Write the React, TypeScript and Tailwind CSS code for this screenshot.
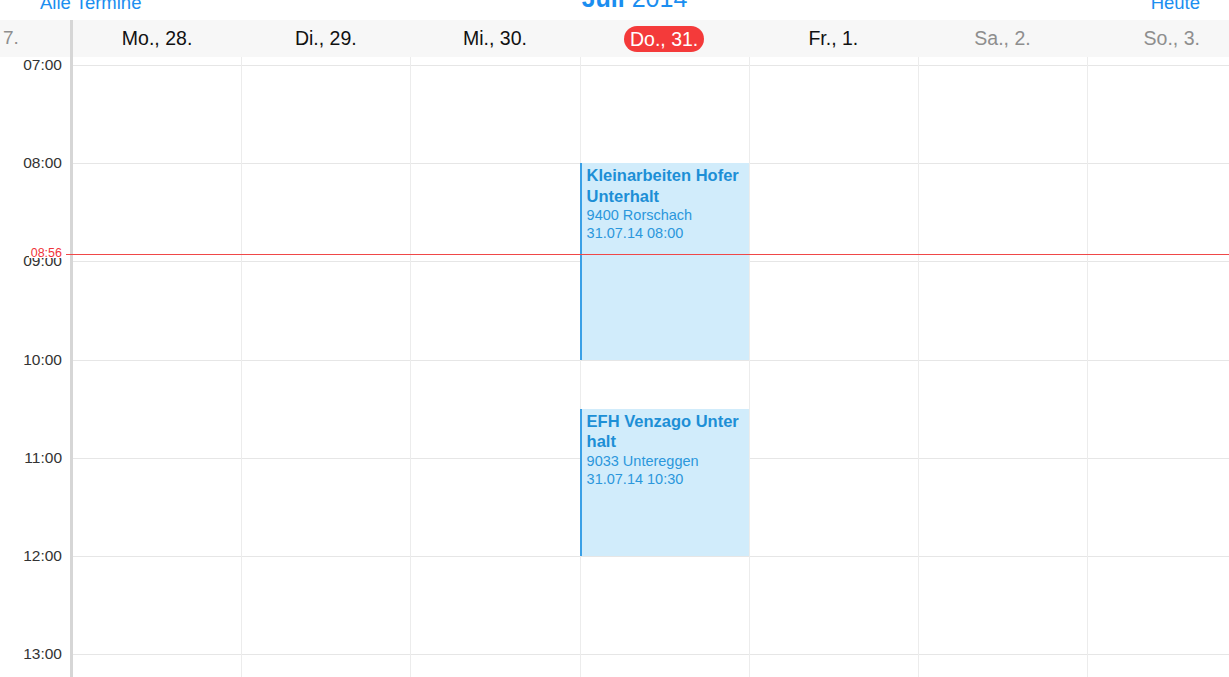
import React from "react";

const days = [
  { label: "Mo., 28.", muted: false, today: false },
  { label: "Di., 29.", muted: false, today: false },
  { label: "Mi., 30.", muted: false, today: false },
  { label: "Do., 31.", muted: false, today: true },
  { label: "Fr., 1.", muted: false, today: false },
  { label: "Sa., 2.", muted: true, today: false },
  { label: "So., 3.", muted: true, today: false },
];

const hours = ["07:00", "08:00", "09:00", "10:00", "11:00", "12:00", "13:00"];
const HOUR = 98.2;
const TOP = 8;
const NOW = TOP + HOUR * (1 + 56 / 60) - 1;

function EventBlock({
  top,
  height,
  title,
  lines,
}: {
  top: number;
  height: number;
  title: React.ReactNode;
  lines: string[];
}) {
  return (
    <div
      className="absolute -left-px right-0 bg-[#d1ecfb] border-l-2 border-[#3aa0e6] pl-[5px] pr-1 pt-[2px] overflow-hidden"
      style={{ top, height }}
    >
      <div className="text-[16.5px] leading-[20.5px] font-bold text-[#1d8fd6] whitespace-nowrap">{title}</div>
      {lines.map((l) => (
        <div key={l} className="text-[14.5px] leading-[18px] text-[#2b97dc] whitespace-nowrap">
          {l}
        </div>
      ))}
    </div>
  );
}

export default function App() {
  return (
    <div
      className="w-[1229px] h-[677px] overflow-hidden bg-white flex flex-col"
      style={{ fontFamily: '"Liberation Sans", Arial, sans-serif' }}
    >
      {/* top bar (cut off) */}
      <div className="h-[20px] shrink-0 flex items-start overflow-hidden relative">
        <div className="w-full flex items-start text-[18.5px] text-[#1b8ef0]">
          <div className="pl-[40px] w-[400px] -mt-[11px]">Alle Termine</div>
          <div className="flex-1 text-center text-[25px] -mt-[20px] pl-[40px]">
            <span className="font-bold">Juli</span> <span>2014</span>
          </div>
          <div className="w-[400px] text-right pr-[29px] -mt-[11px]">Heute</div>
        </div>
      </div>

      {/* header */}
      <div className="h-[37px] shrink-0 flex bg-[#f7f7f7]">
        <div className="w-[70px] shrink-0 text-[19px] text-[#8e8e8e] pl-[3px] flex items-center">7.</div>
        <div className="w-[3px] shrink-0 bg-[#d6d6d6]" />
        <div className="flex">
          {days.map((d, i) => (
            <div
              key={d.label}
              className={`${i === 0 ? "w-[168.2px]" : "w-[169.2px]"} shrink-0 flex items-center justify-center text-[19.5px]`}
            >
              {d.today ? (
                <span className="bg-[#f43a3a] text-white rounded-full px-[6px] h-[26px] leading-[26px]">
                  {d.label}
                </span>
              ) : (
                <span className={d.muted ? "text-[#8e8e8e]" : "text-[#111]"}>{d.label}</span>
              )}
            </div>
          ))}
        </div>
      </div>

      {/* body */}
      <div className="flex-1 flex relative overflow-hidden">
        {/* time labels */}
        <div className="w-[70px] shrink-0 relative" style={{ paddingTop: TOP }}>
          {hours.map((h) => (
            <div key={h} className="relative" style={{ height: HOUR }}>
              <div className="absolute right-[8px] -translate-y-1/2 text-[15.5px] text-[#333]">{h}</div>
            </div>
          ))}
          <div
            className="absolute right-[8px] text-[12.5px] leading-[10px] h-[10px] text-[#f0353a] bg-white pl-[2px]"
            style={{ top: NOW - 6 }}
          >
            08:56
          </div>
        </div>
        <div className="w-[3px] shrink-0 bg-[#d6d6d6]" />

        {/* grid */}
        <div className="flex-1 relative">
          {/* hour lines */}
          <div className="absolute inset-0" style={{ paddingTop: TOP }}>
            {hours.map((h) => (
              <div key={h} className="border-t border-[#e6e6e6]" style={{ height: HOUR }} />
            ))}
          </div>
          <div className="relative flex h-full">
            {days.map((d, i) => (
              <div
                key={d.label}
                className={`${i === 0 ? "w-[168.2px]" : "w-[169.2px] border-l border-[#ececec]"} shrink-0 relative h-full`}
              >
                {d.today && (
                  <>
                    <EventBlock
                      top={TOP + HOUR}
                      height={HOUR * 2}
                      title={<>Kleinarbeiten Hofer<br />Unterhalt</>}
                      lines={["9400 Rorschach", "31.07.14 08:00"]}
                    />
                    <EventBlock
                      top={TOP + HOUR * 3.5}
                      height={HOUR * 1.5}
                      title={<>EFH Venzago Unter<br />halt</>}
                      lines={["9033 Untereggen", "31.07.14 10:30"]}
                    />
                  </>
                )}
              </div>
            ))}
          </div>
          {/* now line */}
          <div className="absolute left-0 right-0 h-px bg-[#f04848]" style={{ top: NOW }} />
        </div>
        {/* now line across label gap */}
        <div className="absolute left-[66px] w-[8px] h-px bg-[#f04848]" style={{ top: NOW }} />
      </div>
    </div>
  );
}
